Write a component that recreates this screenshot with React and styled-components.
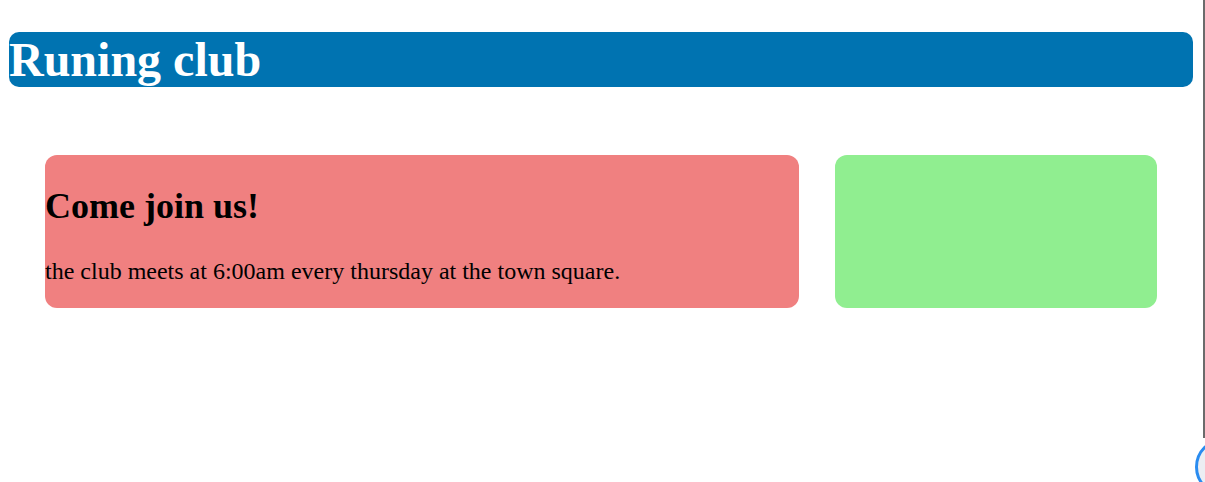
import React from 'react'
import styled, { createGlobalStyle } from 'styled-components'

const GlobalStyle = createGlobalStyle`
	html, body {
		margin: 0;
		background: #fff;
		font-family: "Liberation Serif", "Times New Roman", serif;
	}
`

const Page = styled.div`
	padding-top: 32px;
`

const Header = styled.header`
	background: #0073b1;
	border-radius: 10px;
	margin: 0 12px 0 9px;

	h1 {
		color: #fff;
		font-size: 48px;
		font-weight: bold;
		line-height: 55px;
		margin: 0;
	}
`

const Main = styled.main`
	display: flex;
	gap: 36px;
	margin: 68px 48px 0 45px;
`

const Card = styled.section`
	background: ${props => props.color};
	border-radius: 12px;
	display: flow-root;
	flex: ${props => props.grow};
	font-size: 24px;
	height: 153px;

	h2 {
		font-size: 1.5em;
		margin: 31px 0 31px;
		line-height: 41px;
	}

	p {
		margin: 0;
	}
`

const EdgeLine = styled.div`
	background: #6b6b6b;
	height: 438px;
	position: fixed;
	right: 0;
	top: 0;
	width: 2px;
`

const FloatButton = styled.div`
	background: #eceef3;
	border: 3px solid #2a8cf0;
	border-radius: 50%;
	height: 52px;
	left: 1195px;
	position: fixed;
	top: 438px;
	width: 52px;
`

const App = () => (
	<Page>
		<GlobalStyle />
		<Header>
			<h1>Runing club</h1>
		</Header>
		<Main>
			<Card color="#f08080" grow="754 1 0">
				<h2>Come join us!</h2>
				<p>the club meets at 6:00am every thursday at the town square.</p>
			</Card>
			<Card color="#90ee90" grow="322 1 0" />
		</Main>
		<EdgeLine />
		<FloatButton />
	</Page>
)

export default App
